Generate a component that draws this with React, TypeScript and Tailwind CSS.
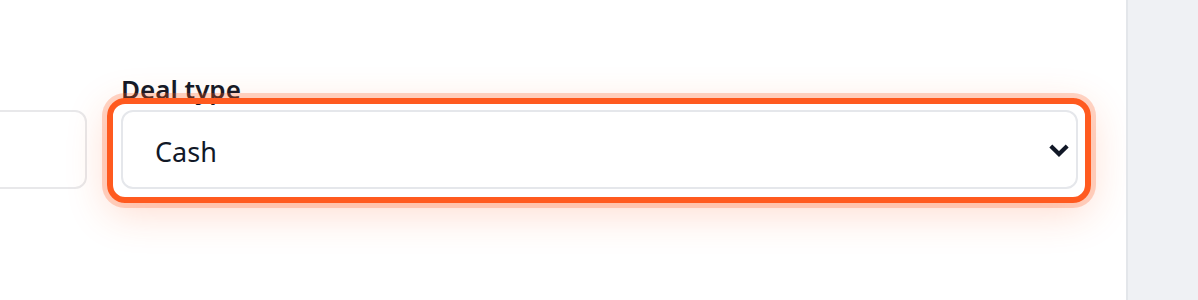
import React from "react";

function Chevron() {
  return (
    <svg
      className="pointer-events-none absolute right-[8px] top-1/2 -translate-y-1/2"
      width="22"
      height="14"
      viewBox="0 0 22 14"
      fill="none"
    >
      <path d="M2.8 3L11 11L19.2 3" stroke="#111827" strokeWidth="4.2" strokeLinecap="butt" strokeLinejoin="miter" />
    </svg>
  );
}

export default function App() {
  return (
    <div className="flex h-[300px] w-full bg-white" style={{ fontFamily: '"Noto Sans", "Open Sans", sans-serif' }}>
      <main className="flex-1 overflow-hidden pt-[74px]">
        {/* the row continues off to the left, only the tail of the first field shows */}
        <div className="ml-[-870px] grid grid-cols-[957px_957px] gap-x-[34px]">
          <div className="flex flex-col">
            <div className="mb-[6px] h-[30px]" />
            <input className="h-[79px] rounded-[12px] border-2 border-[#e8e8ea] bg-white px-[32px] text-[27px] outline-none" />
          </div>
          <div className="flex flex-col">
            <label className="mb-[6px] text-[26px] leading-[30px] font-semibold text-[#111827]">Deal type</label>
            <div className="relative">
              <select
                defaultValue="cash"
                className="h-[79px] w-full appearance-none rounded-[12px] border-2 border-[#e5e7eb] bg-white pl-[32px] pr-[48px] pt-[5px] text-[27px] text-[#111827] outline-none"
              >
                <option value="cash">Cash</option>
                <option value="mortgage">Mortgage</option>
              </select>
              <Chevron />
              {/* highlight ring */}
              <div className="pointer-events-none absolute -top-[12px] -bottom-[14px] -left-[14px] -right-[13px] rounded-[18px] border-[6px] border-[#ff5a1f] shadow-[0_0_0_5px_rgba(255,90,31,0.25),0_10px_40px_rgba(255,90,31,0.22)]" />
            </div>
          </div>
        </div>
      </main>
      <aside className="w-[72px] shrink-0 border-l-2 border-[#e3e6ea] bg-[#eff1f4]" />
    </div>
  );
}
